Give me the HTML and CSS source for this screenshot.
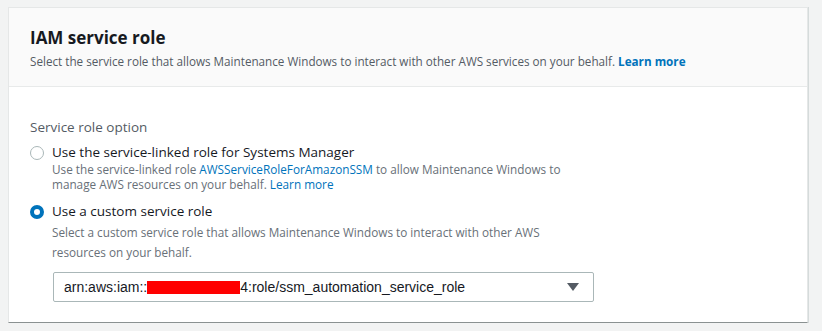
FILE: index.html
```html
<!DOCTYPE html>
<html lang="en">
<head>
  <meta charset="UTF-8" />
  <title>IAM service role</title>
  <link rel="stylesheet" href="styles.css">
</head>
<body>

  <!-- IAM service role panel -->
  <div class="panel">
    <div class="panel-header">
      <h2>IAM service role</h2>
      <p class="panel-desc">Select the service role that allows Maintenance Windows to interact with other AWS services on your behalf. <a class="bold-link">Learn more</a></p>
    </div>

    <div class="panel-body">
      <div class="field-label">Service role option</div>

      <div class="radio-group">
        <div class="radio-option">
          <span class="radio"></span>
          <div class="radio-text">
            <div class="radio-label">Use the service-linked role for Systems Manager</div>
            <div class="radio-desc">Use the service-linked role <a>AWSServiceRoleForAmazonSSM</a> to allow Maintenance Windows to<br>manage AWS resources on your behalf. <a>Learn more</a></div>
          </div>
        </div>

        <div class="radio-option">
          <span class="radio checked"></span>
          <div class="radio-text">
            <div class="radio-label">Use a custom service role</div>
            <div class="radio-desc tall">Select a custom service role that allows Maintenance Windows to interact with other AWS<br>resources on your behalf.</div>
          </div>
        </div>
      </div>

      <div class="select-box">
        <span class="select-value">arn:aws:iam::<span class="redacted"></span>4:role/ssm_automation_service_role</span>
        <svg class="caret" width="12" height="10" viewBox="0 0 12 10"><path d="M0 1h12L6 9z" fill="#545b64"/></svg>
      </div>
    </div>
  </div>

</body>
</html>
```

FILE: styles.css
```css
body {
  margin: 0;
  padding: 7px 0 0 8px;
  background: #f2f3f3;
  font-family: 'Open Sans', 'Noto Sans', sans-serif;
  color: #16191f;
  height: 331px;
  box-sizing: border-box;
}

.panel {
  width: 800px;
  background: #fff;
  border: 1px solid #e5e7e7;
  border-bottom: 1px solid #8a9191;
  box-shadow: 1px 0 0 #d5dbdb;
  box-sizing: border-box;
}

.panel-header {
  background: #fafafa;
  border-bottom: 1px solid #e8eaea;
  padding: 17px 20px 16px 21px;
}

h2 {
  margin: 0;
  font-size: 17px;
  font-weight: 700;
  line-height: 26px;
  color: #16191f;
}

.panel-desc {
  margin: 1px 0 0;
  font-size: 11.7px;
  line-height: 18px;
  color: #545b64;
}

a {
  color: #0073bb;
  cursor: pointer;
  text-decoration: none;
}

.bold-link {
  font-weight: 700;
}

.panel-body {
  padding: 30px 20px 20px 21px;
}

.field-label {
  font-size: 13.5px;
  line-height: 20px;
  color: #545b64;
  margin-bottom: 5px;
}

.radio-group {
  display: flex;
  flex-direction: column;
  gap: 9px;
}

.radio-option {
  display: flex;
  align-items: flex-start;
}

.radio {
  width: 14px;
  height: 14px;
  border: 1px solid #aab7b8;
  border-radius: 50%;
  margin: 4px 8px 0 0;
  flex-shrink: 0;
  box-sizing: border-box;
}

.radio.checked {
  border: 4px solid #0073bb;
  background: #fff;
}

.radio-label {
  font-size: 13.5px;
  line-height: 20px;
  color: #16191f;
}

.radio-desc {
  font-size: 11.75px;
  line-height: 15px;
  color: #687078;
}

.radio-desc.tall {
  line-height: 20px;
  margin-top: 1px;
}

.select-box {
  margin: 10px 0 0 23px;
  width: 541px;
  height: 30px;
  border: 1px solid #aab7b8;
  border-radius: 2px;
  box-sizing: border-box;
  display: flex;
  align-items: center;
  justify-content: space-between;
  padding: 0 14px 0 10px;
}

.select-value {
  font-family: 'Liberation Sans', Arial, sans-serif;
  font-size: 14px;
  color: #16191f;
  display: flex;
  align-items: center;
}

.redacted {
  display: inline-block;
  width: 93px;
  height: 13px;
  background: #ff0000;
}
```
